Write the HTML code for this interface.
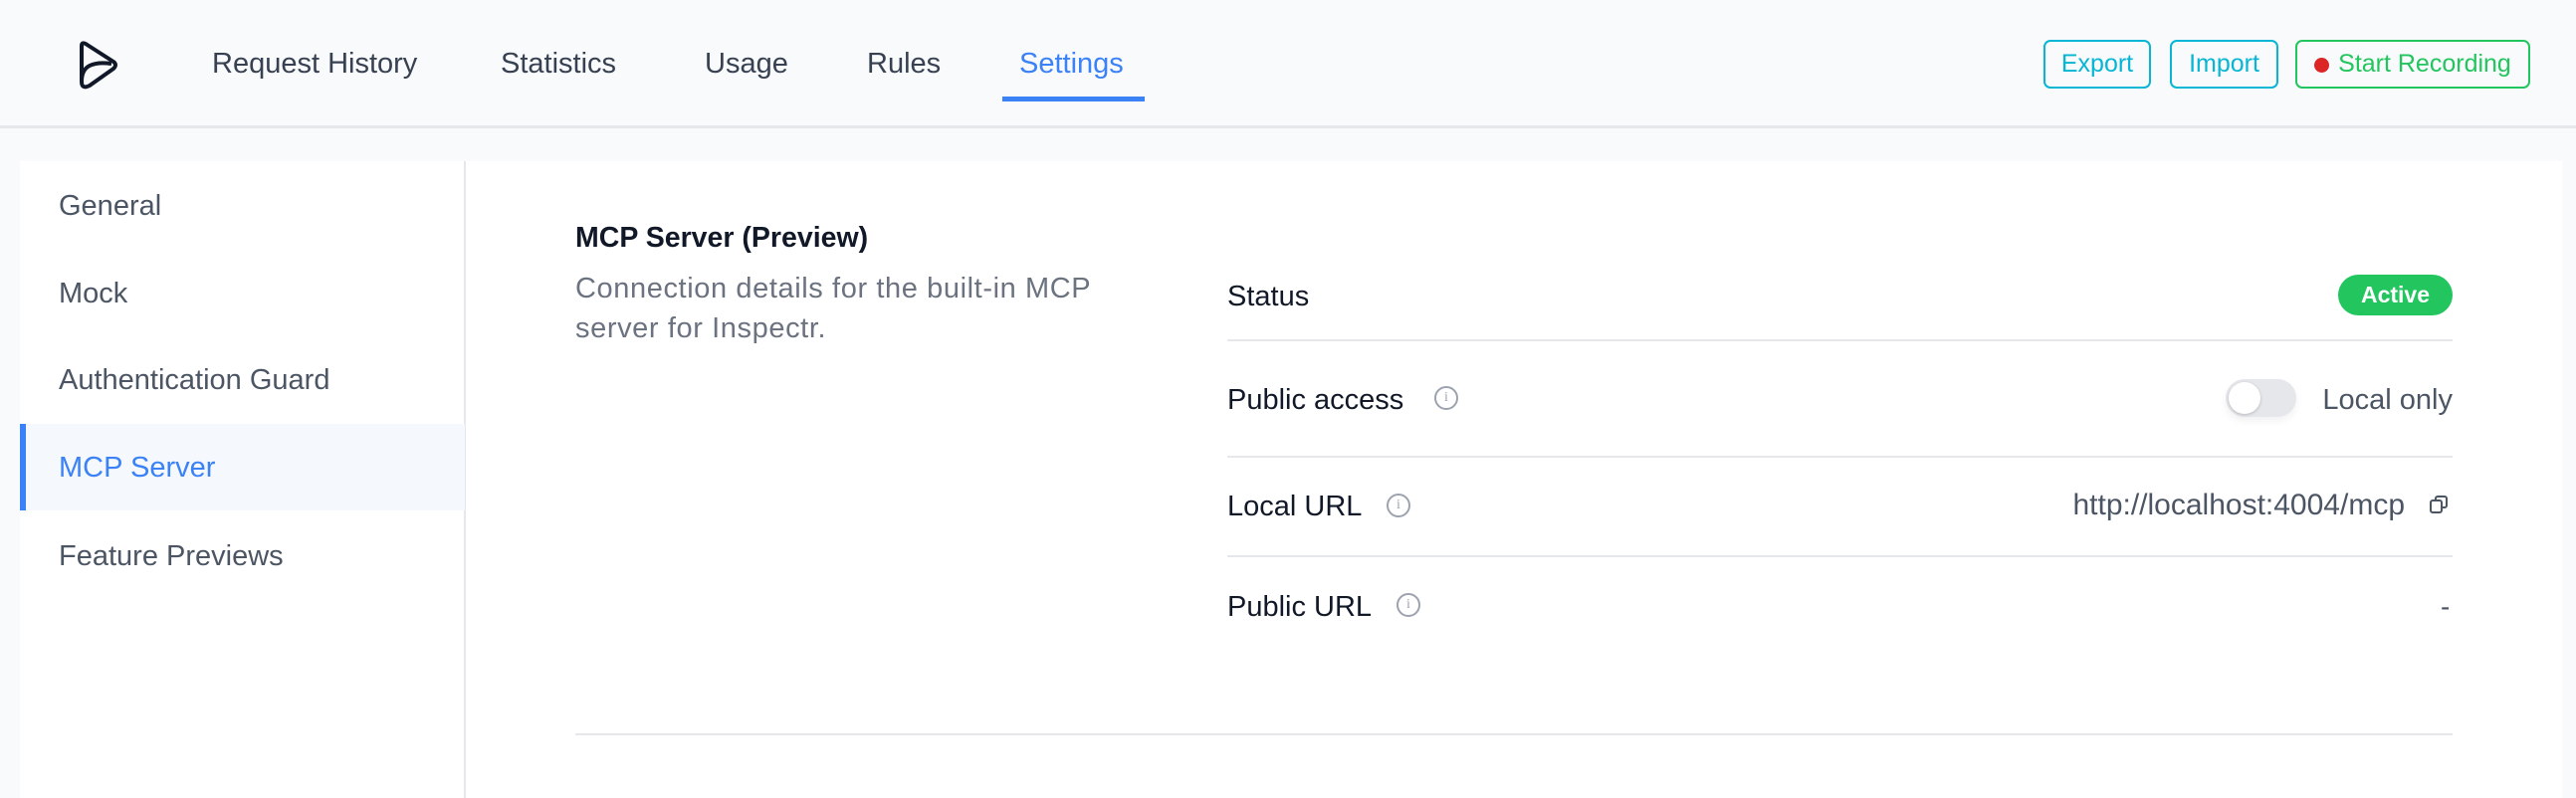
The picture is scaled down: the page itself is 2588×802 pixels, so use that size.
<!DOCTYPE html>
<html><head><meta charset="utf-8"><style>
*{box-sizing:border-box;margin:0;padding:0}
body{width:2588px;height:794px;overflow:hidden;background:#f8fafc;font-family:"Liberation Sans",sans-serif;position:relative}
.a{position:absolute;white-space:nowrap}
.hdr{position:absolute;left:0;top:0;width:2588px;height:129px;border-bottom:3px solid #e5e7eb;background:#f8fafc}
.nav{font-size:29px;color:#374151;top:48px;font-weight:500}
.btn{position:absolute;top:40px;height:49px;border:2px solid #06b6d4;border-radius:7px;color:#06b6d4;font-size:25px;line-height:45px;text-align:center}
.card{position:absolute;left:20px;top:162px;width:2554px;height:640px;background:#fff}
.side{position:absolute;left:20px;top:162px;width:448px;height:640px;border-right:2px solid #e5e7eb}
.si{font-size:29px;color:#4b5563;left:59px}
.lbl{font-size:29px;color:#111827;font-weight:500;left:1233px}
.div{position:absolute;left:1233px;width:1231px;height:2px;background:#e5e7eb}
.info{position:absolute;width:24px;height:24px;border:2px solid #9ca3af;border-radius:50%;color:#9ca3af;font-size:14px;line-height:20px;text-align:center;font-family:"Liberation Serif",serif}
</style></head><body>
<div class="hdr"></div>
<svg class="a" style="left:76px;top:40px" width="48" height="50" viewBox="0 0 48 50"><path d="M6 6 Q6 2 10 4 L38 22 Q42 25 38 29 L14 46 Q6 50 6 42 Z M6 42 Q6 30 14 26 Q22 22 36 24" fill="none" stroke="#111827" stroke-width="4" stroke-linejoin="round"/></svg>
<div class="a nav" style="left:213px">Request History</div>
<div class="a nav" style="left:503px">Statistics</div>
<div class="a nav" style="left:708px">Usage</div>
<div class="a nav" style="left:871px">Rules</div>
<div class="a nav" style="left:1024px;color:#3b82f6">Settings</div>
<div class="a" style="left:1007px;top:97px;width:143px;height:5px;background:#3b82f6"></div>
<div class="btn" style="left:2053px;width:108px">Export</div>
<div class="btn" style="left:2180px;width:109px">Import</div>
<div class="btn" style="left:2306px;width:236px;border-color:#22c55e;color:#22c55e"><span style="display:inline-block;width:15px;height:15px;border-radius:50%;background:#dc2626;margin-right:9px;vertical-align:-1px"></span>Start Recording</div>
<div class="card"></div>
<div class="side"></div>
<div class="a si" style="top:191px">General</div>
<div class="a si" style="top:279px">Mock</div>
<div class="a si" style="top:366px">Authentication Guard</div>
<div class="a" style="left:20px;top:426px;width:447px;height:87px;background:#f5f8fc;border-left:6px solid #3b82f6"></div>
<div class="a si" style="top:454px;color:#3b82f6">MCP Server</div>
<div class="a si" style="top:543px">Feature Previews</div>
<div class="a" style="left:578px;top:223px;font-size:28.5px;font-weight:600;color:#111827">MCP Server (Preview)</div>
<div class="a" style="left:578px;top:270px;font-size:29px;letter-spacing:0.6px;line-height:40px;color:#6b7280;white-space:normal;width:575px">Connection details for the built-in MCP server for Inspectr.</div>
<div class="a lbl" style="top:282px">Status</div>
<div class="a" style="left:2349px;top:276px;width:115px;height:41px;border-radius:21px;background:#22c55e;color:#fff;font-size:23px;font-weight:600;line-height:41px;text-align:center">Active</div>
<div class="div" style="top:341px"></div>
<div class="a lbl" style="top:386px">Public access</div>
<div class="info" style="left:1441px;top:388px">i</div>
<div class="a" style="left:2236px;top:381px;width:71px;height:38px;border-radius:19px;background:#e5e7eb;box-shadow:0 4px 8px rgba(0,0,0,.06)"><div style="position:absolute;left:3px;top:3px;width:32px;height:32px;border-radius:50%;background:#fff;box-shadow:0 1px 3px rgba(0,0,0,.2)"></div></div>
<div class="a" style="right:124px;top:386px;font-size:29px;color:#4b5563">Local only</div>
<div class="div" style="top:458px"></div>
<div class="a lbl" style="top:493px">Local URL</div>
<div class="info" style="left:1393px;top:496px">i</div>
<div class="a" style="right:172px;top:491px;font-size:30px;color:#4b5563">http://localhost:4004/mcp</div>
<svg class="a" style="left:2440px;top:497px" width="20" height="20" viewBox="0 0 20 20"><rect x="2" y="6" width="11" height="12" rx="2" fill="none" stroke="#4b5563" stroke-width="2"/><path d="M7 5 V4 a2 2 0 0 1 2-2 h7 a2 2 0 0 1 2 2 v7 a2 2 0 0 1-2 2 h-2" fill="none" stroke="#4b5563" stroke-width="2"/></svg>
<div class="div" style="top:558px"></div>
<div class="a lbl" style="top:594px">Public URL</div>
<div class="info" style="left:1403px;top:596px">i</div>
<div class="a" style="left:2452px;top:594px;font-size:28px;color:#4b5563">-</div>
<div class="a" style="left:578px;top:737px;width:1886px;height:2px;background:#e5e7eb"></div>
</body></html>
